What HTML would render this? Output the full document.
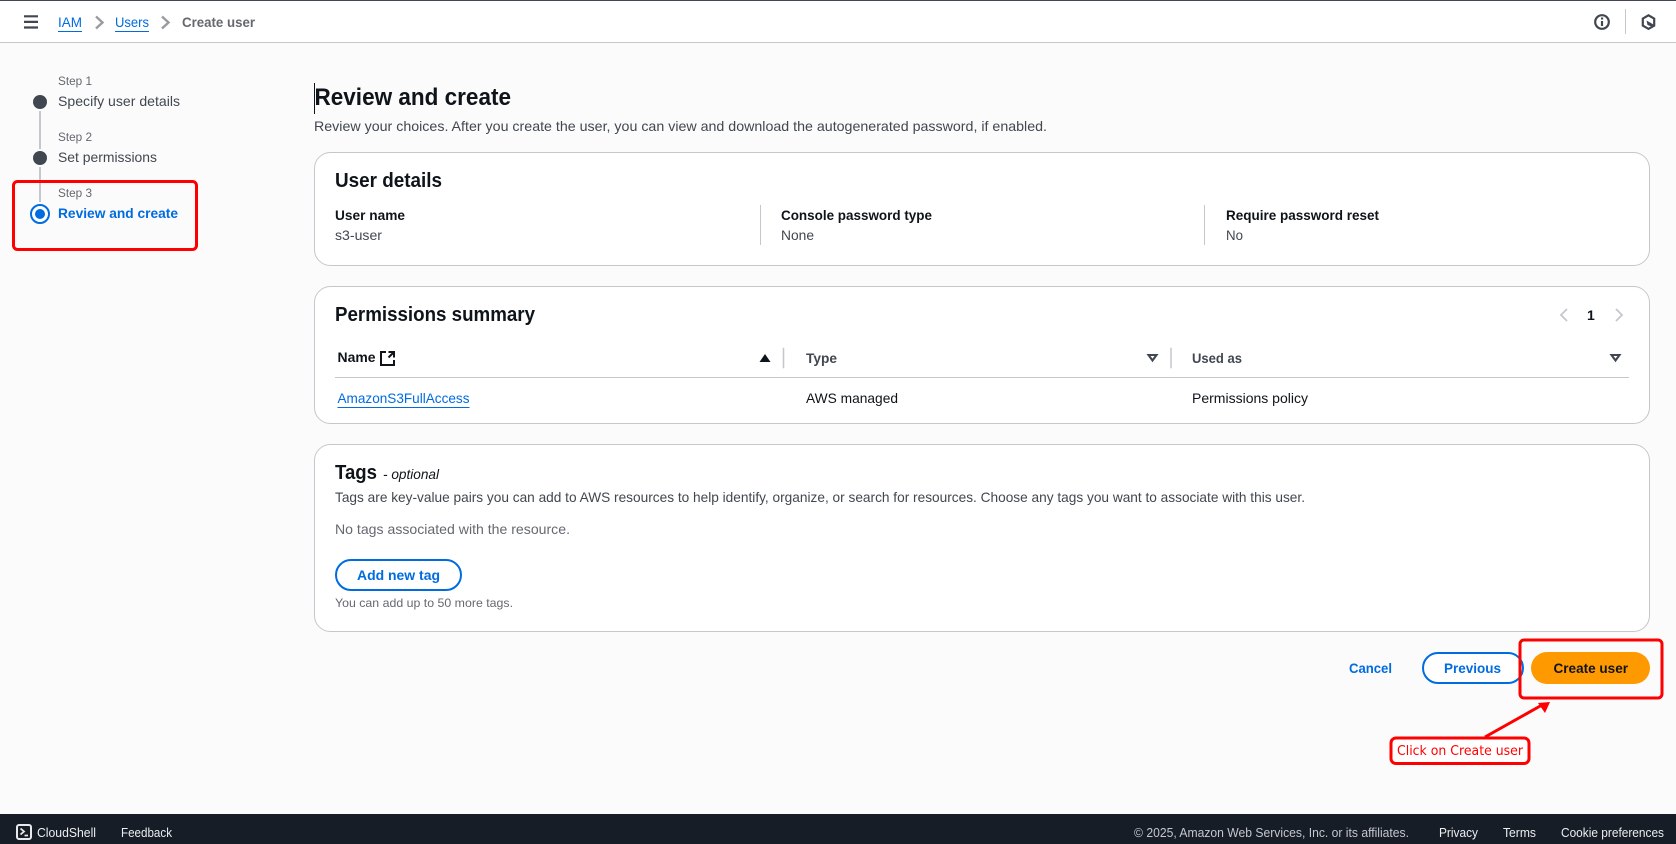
<!DOCTYPE html>
<html lang="en"><head><meta charset="utf-8"><title>Create user</title>
<style>
html,body{margin:0;padding:0;width:1676px;height:844px;overflow:hidden;background:#fbfbfb}
svg{display:block;font-family:"Liberation Sans",sans-serif;font-size:14px}
.b{font-weight:700}
.d{fill:#0f141a}
.g{fill:#414750}
.m{fill:#656871}
.l{fill:#006ce0}
.f{fill:#d5d8dc;font-size:13px}
.card{fill:#fff;stroke:#c6c6cd;stroke-width:1}
.red{fill:none;stroke:#f00;stroke-width:3}
</style></head><body>
<svg width="1676" height="844" viewBox="0 0 1676 844" xmlns="http://www.w3.org/2000/svg">
<rect width="1676" height="844" fill="#fbfbfb"/>
<!-- top bar -->
<rect width="1676" height="42" fill="#fff"/>
<rect width="1676" height="1" fill="#414750"/>
<rect y="42" width="1676" height="1" fill="#c6c6cd"/>
<path d="M24 16.300h14M24 21.900h14M24 27.500h14" stroke="#414750" stroke-width="2.200" fill="none"/>
<text x="58" y="27" textLength="24" lengthAdjust="spacingAndGlyphs" class="l">IAM</text>
<rect x="58" y="31" width="24" height="1" fill="#006ce0"/>
<path d="M96 16.500l6.500 6-6.500 6" stroke="#9a9aa2" stroke-width="2.400" fill="none"/>
<text x="115" y="27" textLength="34" lengthAdjust="spacingAndGlyphs" class="l">Users</text>
<rect x="115" y="31" width="34" height="1" fill="#006ce0"/>
<path d="M162 16.500l6.500 6-6.500 6" stroke="#9a9aa2" stroke-width="2.400" fill="none"/>
<text x="182" y="27" textLength="73" lengthAdjust="spacingAndGlyphs" class="m b">Create user</text>
<circle cx="1602" cy="22" r="6.800" fill="none" stroke="#414750" stroke-width="2.200"/>
<path d="M1602 21v5" stroke="#414750" stroke-width="2.200"/><rect x="1601" y="17.500" width="2.200" height="2" fill="#414750"/>
<rect x="1625" y="9" width="1" height="25" fill="#c6c6cd"/>
<path d="M1648.500 15.300l5.700 3.300v7l-5.700 3.300-5.700-3.300v-7z" fill="none" stroke="#414750" stroke-width="2.200"/>
<path d="M1646.500 20.500l7 4-2 2-4-1.500z" fill="#414750"/>

<!-- steps -->
<rect x="39" y="111" width="2" height="38" fill="#c6c6cd"/>
<rect x="39" y="167" width="2" height="35" fill="#c6c6cd"/>
<text x="58" y="85" textLength="34" lengthAdjust="spacingAndGlyphs" class="m" style="font-size:12px">Step 1</text>
<circle cx="40" cy="102" r="7" fill="#414750"/>
<text x="58" y="106" textLength="122" lengthAdjust="spacingAndGlyphs" class="g">Specify user details</text>
<text x="58" y="141" textLength="34" lengthAdjust="spacingAndGlyphs" class="m" style="font-size:12px">Step 2</text>
<circle cx="40" cy="158" r="7" fill="#414750"/>
<text x="58" y="162" textLength="99" lengthAdjust="spacingAndGlyphs" class="g">Set permissions</text>
<text x="58" y="197" textLength="34" lengthAdjust="spacingAndGlyphs" class="m" style="font-size:12px">Step 3</text>
<circle cx="40" cy="214" r="9" fill="#fff" stroke="#006ce0" stroke-width="2"/>
<circle cx="40" cy="214" r="5" fill="#006ce0"/>
<text x="58" y="218" textLength="120" lengthAdjust="spacingAndGlyphs" class="l b">Review and create</text>
<rect x="13.500" y="181.500" width="183" height="68" rx="4" class="red"/>

<!-- heading -->
<rect x="314" y="83" width="1" height="31" fill="#0f141a"/>
<text x="314.500" y="105" textLength="196.500" lengthAdjust="spacingAndGlyphs" class="d b" style="font-size:24px">Review and create</text>
<text x="314" y="131" textLength="733" lengthAdjust="spacingAndGlyphs" class="g">Review your choices. After you create the user, you can view and download the autogenerated password, if enabled.</text>

<!-- card 1 -->
<rect x="314.500" y="152.500" width="1335" height="113" rx="16" class="card"/>
<text x="335" y="187" textLength="107" lengthAdjust="spacingAndGlyphs" class="d b" style="font-size:20px">User details</text>
<text x="335" y="220" textLength="70" lengthAdjust="spacingAndGlyphs" class="d b">User name</text>
<text x="335" y="240" textLength="47" lengthAdjust="spacingAndGlyphs" class="g">s3-user</text>
<rect x="760" y="205" width="1" height="40" fill="#c6c6cd"/>
<text x="781" y="220" textLength="151" lengthAdjust="spacingAndGlyphs" class="d b">Console password type</text>
<text x="781" y="240" textLength="33" lengthAdjust="spacingAndGlyphs" class="g">None</text>
<rect x="1204" y="205" width="1" height="40" fill="#c6c6cd"/>
<text x="1226" y="220" textLength="153" lengthAdjust="spacingAndGlyphs" class="d b">Require password reset</text>
<text x="1226" y="240" textLength="17" lengthAdjust="spacingAndGlyphs" class="g">No</text>

<!-- card 2 -->
<rect x="314.500" y="286.500" width="1335" height="137" rx="16" class="card"/>
<text x="335" y="321" textLength="200" lengthAdjust="spacingAndGlyphs" class="d b" style="font-size:20px">Permissions summary</text>
<path d="M1567 309l-6 6 6 6" stroke="#c6c6cd" stroke-width="1.800" fill="none"/>
<text x="1587" y="320" class="d b">1</text>
<path d="M1616 309l6 6-6 6" stroke="#c6c6cd" stroke-width="1.800" fill="none"/>
<text x="337.500" y="362" textLength="38" lengthAdjust="spacingAndGlyphs" class="d b">Name</text>
<path d="M386 352h-5v13h13v-5" stroke="#0f141a" stroke-width="2" fill="none"/>
<path d="M388.500 352h5.500v5.500M394 352l-5.500 5.500" stroke="#0f141a" stroke-width="2" fill="none"/>
<path d="M759.500 362l5.500-8 5.500 8z" fill="#0f141a"/>
<rect x="783" y="348" width="1" height="20" fill="#c6c6cd" stroke="#c6c6cd" stroke-width=".5"/>
<text x="806" y="363" textLength="31" lengthAdjust="spacingAndGlyphs" class="g b">Type</text>
<path d="M1148.500 355h8l-4 5.500z" fill="none" stroke="#414750" stroke-width="2.100"/>
<rect x="1170.500" y="348" width="1" height="20" fill="#c6c6cd" stroke="#c6c6cd" stroke-width=".5"/>
<text x="1192" y="363" textLength="50" lengthAdjust="spacingAndGlyphs" class="g b">Used as</text>
<path d="M1611.500 355h8l-4 5.500z" fill="none" stroke="#414750" stroke-width="2.100"/>
<rect x="335" y="377" width="1294" height="1" fill="#c6c6cd"/>
<text x="337.500" y="403" textLength="132" lengthAdjust="spacingAndGlyphs" class="l">AmazonS3FullAccess</text>
<rect x="337.500" y="407" width="132" height="1" fill="#006ce0"/>
<text x="806" y="403" textLength="92" lengthAdjust="spacingAndGlyphs" class="d">AWS managed</text>
<text x="1192" y="403" textLength="116" lengthAdjust="spacingAndGlyphs" class="d">Permissions policy</text>

<!-- card 3 -->
<rect x="314.500" y="444.500" width="1335" height="187" rx="16" class="card"/>
<text x="335" y="479" textLength="42" lengthAdjust="spacingAndGlyphs" class="d b" style="font-size:20px">Tags</text>
<text x="383" y="479" textLength="56" lengthAdjust="spacingAndGlyphs" class="d" style="font-style:italic">- optional</text>
<text x="335" y="502" textLength="970" lengthAdjust="spacingAndGlyphs" class="g">Tags are key-value pairs you can add to AWS resources to help identify, organize, or search for resources. Choose any tags you want to associate with this user.</text>
<text x="335" y="534" textLength="235" lengthAdjust="spacingAndGlyphs" class="m">No tags associated with the resource.</text>
<rect x="336" y="560" width="125" height="30" rx="15" fill="#fff" stroke="#006ce0" stroke-width="2"/>
<text x="357" y="580" textLength="83" lengthAdjust="spacingAndGlyphs" class="l b">Add new tag</text>
<text x="335" y="607" textLength="178" lengthAdjust="spacingAndGlyphs" class="m" style="font-size:12px">You can add up to 50 more tags.</text>

<!-- actions -->
<text x="1349" y="673" textLength="43" lengthAdjust="spacingAndGlyphs" class="l b">Cancel</text>
<rect x="1423" y="653" width="100" height="30" rx="15" fill="#fff" stroke="#006ce0" stroke-width="2"/>
<text x="1444" y="673" textLength="57" lengthAdjust="spacingAndGlyphs" class="l b">Previous</text>
<rect x="1531" y="652" width="119" height="32" rx="16" fill="#f90"/>
<text x="1553.500" y="673" textLength="74.500" lengthAdjust="spacingAndGlyphs" class="d b">Create user</text>

<!-- annotations -->
<rect x="1520" y="640" width="142" height="58" rx="4" class="red"/>
<path d="M1485 737l57-32" stroke="#f00" stroke-width="3" fill="none"/>
<path d="M1550 702l-12 1 7 10z" fill="#f00"/>
<rect x="1391" y="738" width="138" height="25.500" rx="5" fill="#fff" stroke="#f00" stroke-width="3"/>
<text x="1397" y="755" textLength="126" lengthAdjust="spacingAndGlyphs" style="font-family:'DejaVu Sans',sans-serif;font-size:13.500px;fill:#f00">Click on Create user</text>

<!-- footer -->
<rect y="814" width="1676" height="30" fill="#161d26"/>
<rect x="17" y="825" width="14" height="14" rx="2" fill="none" stroke="#e8e9ea" stroke-width="2"/>
<path d="M20.500 828.500l3.500 3-3.500 3M24.500 835.500h3.500" stroke="#e8e9ea" stroke-width="1.800" fill="none"/>
<text x="37" y="837" textLength="59" lengthAdjust="spacingAndGlyphs" class="f" style="fill:#eceef0">CloudShell</text>
<text x="121" y="837" textLength="51" lengthAdjust="spacingAndGlyphs" class="f" style="fill:#eceef0">Feedback</text>
<text x="1134" y="837" textLength="275" lengthAdjust="spacingAndGlyphs" class="f" style="fill:#c6c6cd">© 2025, Amazon Web Services, Inc. or its affiliates.</text>
<text x="1439" y="837" textLength="39" lengthAdjust="spacingAndGlyphs" class="f" style="fill:#eceef0">Privacy</text>
<text x="1503" y="837" textLength="33" lengthAdjust="spacingAndGlyphs" class="f" style="fill:#eceef0">Terms</text>
<text x="1561" y="837" textLength="103" lengthAdjust="spacingAndGlyphs" class="f" style="fill:#eceef0">Cookie preferences</text>
</svg>
</body></html>
